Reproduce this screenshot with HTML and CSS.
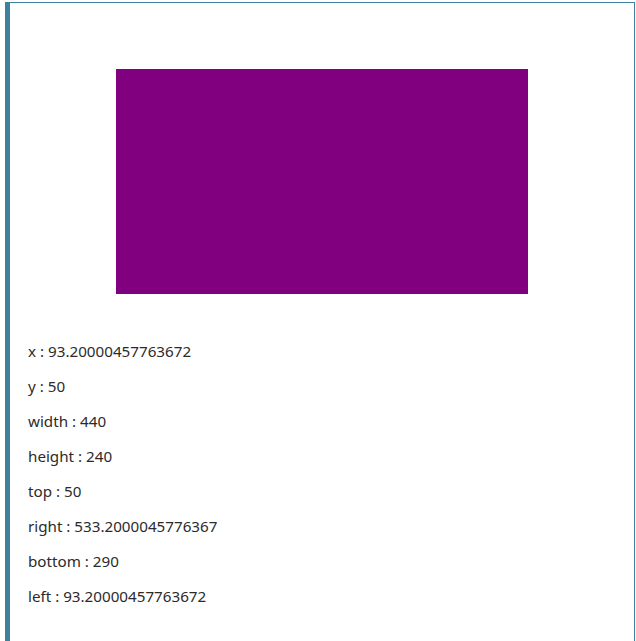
FILE: index.html
```html
<!DOCTYPE html>
<html>
<head>
<meta charset="utf-8">
<link rel="stylesheet" href="styles.css">
</head>
<body>
<div class="panel">
  <div class="stage"><div class="box"></div></div>
  <div class="info">
    <p class="line">x : 93.20000457763672</p>
    <p class="line">y : 50</p>
    <p class="line">width : 440</p>
    <p class="line">height : 240</p>
    <p class="line">top : 50</p>
    <p class="line">right : 533.2000045776367</p>
    <p class="line">bottom : 290</p>
    <p class="line">left : 93.20000457763672</p>
  </div>
</div>
</body>
</html>
```

FILE: styles.css
```css
html, body {
  margin: 0;
  padding: 0;
  background: #fff;
}
.panel {
  margin: 2px 1px 0 5px;
  border-top: 1px solid #3d819c;
  border-right: 1px solid #3d819c;
  border-left: 5px solid #3d819c;
  height: 660px;
  font-family: "Noto Sans", sans-serif;
  font-size: 15.2px;
  color: #2b2b2b;
}
.stage {
  display: flex;
  justify-content: center;
  padding-top: 66px;
}
.box {
  width: 412px;
  height: 225px;
  background: #800080;
}
.info {
  padding: 32px 0 0 18px;
}
.line {
  margin: 15px 0;
  line-height: 20px;
}
```
